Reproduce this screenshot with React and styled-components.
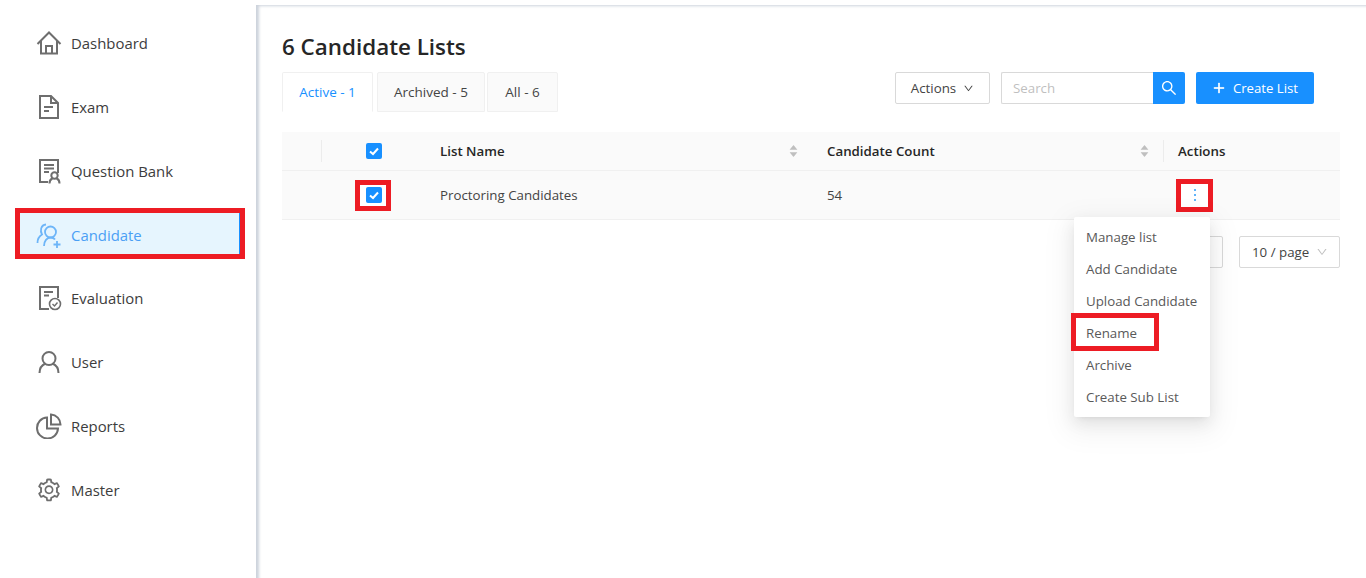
import React from 'react';
import styled, { createGlobalStyle } from 'styled-components';
import {
  AiOutlineDown,
  AiOutlinePlus,
  AiOutlineSearch,
  AiOutlineCaretUp,
  AiOutlineCaretDown,
  AiOutlineSetting,
} from 'react-icons/ai';

const RED = '#ed1c24';
const BLUE = '#1890ff';

const GlobalStyle = createGlobalStyle`
  html, body {
    margin: 0;
    padding: 0;
    background: #fff;
  }
  body {
    font-family: "Open Sans", "Noto Sans", "Liberation Sans", sans-serif;
    font-size: 13.3px;
    color: #333;
  }
  * {
    box-sizing: border-box;
  }
`;

const Page = styled.div`
  display: flex;
  width: 1366px;
  height: 578px;
  overflow: hidden;
`;

const Sidebar = styled.nav`
  width: 256px;
  flex: none;
  padding: 22.5px 16px 0 20px;
  display: flex;
  flex-direction: column;
`;

const NavRow = styled.div`
  height: 41px;
  margin: ${(p) => (p.$active ? '-1px 0 23.8px' : '0 0 22.8px')};
  padding: ${(p) => (p.$active ? '3px 0 0 16px' : '0 0 0 16px')};
  display: flex;
  align-items: center;
  gap: 9px;
  font-size: 14.9px;
  color: ${(p) => (p.$active ? '#4a9ff5' : '#3d3d3d')};
  background: ${(p) => (p.$active ? '#e6f5fe' : 'transparent')};
  border-right: ${(p) => (p.$active ? `1px solid ${BLUE}` : '0')};
  outline: ${(p) => (p.$active ? `5px solid ${RED}` : '0')};
  width: 220px;
  svg {
    flex: none;
    width: 26px;
    height: 26px;
  }
`;

const Main = styled.main`
  flex: 1;
  margin-top: 5px;
  padding: 27px 26px 0 26px;
  position: relative;
  box-shadow: inset 4px 2px 3px -1px #cdd3dc;
`;

const Title = styled.h1`
  margin: 0 0 10px;
  font-size: 22.4px;
  line-height: 30px;
  font-weight: 600;
  color: #262626;
`;

const TopRow = styled.div`
  display: flex;
  justify-content: space-between;
  align-items: flex-start;
  height: 60px;
`;

const Tabs = styled.div`
  display: flex;
  gap: 2px;
`;

const Tab = styled.div`
  width: ${(p) => p.$w}px;
  height: 40px;
  display: flex;
  align-items: center;
  justify-content: center;
  font-size: 13.5px;
  border: 1px solid #f0f0f0;
  color: ${(p) => (p.$active ? BLUE : '#444')};
  background: ${(p) => (p.$active ? '#fff' : '#fafafa')};
  border-bottom-color: ${(p) => (p.$active ? '#fff' : '#f0f0f0')};
  margin-right: ${(p) => (p.$active ? '2px' : '0')};
  border-radius: 2px 2px 0 0;
`;

const Toolbar = styled.div`
  display: flex;
  margin-right: 26px;
  gap: 11px;
`;

const ActionsButton = styled.button`
  width: 95px;
  height: 32px;
  border: 1px solid #d9d9d9;
  border-radius: 2px;
  background: #fff;
  color: #444;
  font: inherit;
  display: flex;
  align-items: center;
  justify-content: center;
  gap: 7px;
  padding: 0;
  svg {
    width: 11px;
    height: 11px;
  }
`;

const SearchBox = styled.div`
  display: flex;
  width: 184px;
  height: 32px;
`;

const SearchInput = styled.div`
  flex: 1;
  border: 1px solid #d9d9d9;
  border-right: 0;
  border-radius: 2px 0 0 2px;
  padding-left: 11px;
  line-height: 30px;
  color: #bfbfbf;
`;

const SearchButton = styled.div`
  width: 32px;
  background: ${BLUE};
  border-radius: 0 2px 2px 0;
  color: #fff;
  display: flex;
  align-items: center;
  justify-content: center;
  svg {
    width: 18px;
    height: 18px;
  }
`;

const CreateButton = styled.div`
  width: 118px;
  height: 32px;
  background: ${BLUE};
  border-radius: 2px;
  color: #fff;
  font-size: 13.2px;
  display: flex;
  align-items: center;
  justify-content: center;
  gap: 7px;
  svg {
    width: 14px;
    height: 14px;
    stroke: currentColor;
    stroke-width: 50;
  }
`;

const TableGrid = styled.div`
  width: 1058px;
  display: grid;
  grid-template-columns: 40px 104px 387px 351px 176px;
  background: #fafafa;
`;

const HeadCell = styled.div`
  height: 39px;
  padding: 0 14px;
  display: flex;
  align-items: center;
  justify-content: ${(p) => (p.$center ? 'center' : 'space-between')};
  font-weight: 600;
  color: #262626;
  border-bottom: 1px solid #f0f0f0;
  position: relative;
  &::after {
    content: ${(p) => (p.$divider ? '""' : 'none')};
    position: absolute;
    right: 0;
    top: 8px;
    height: 22px;
    width: 1px;
    background: #ececec;
  }
`;

const BodyCell = styled.div`
  height: 49px;
  padding: 0 14px;
  display: flex;
  align-items: center;
  justify-content: ${(p) => (p.$center ? 'center' : 'flex-start')};
  color: #444;
  border-bottom: 1px solid #f0f0f0;
`;

const SortIcon = styled.span`
  display: flex;
  flex-direction: column;
  color: #bfbfbf;
  svg {
    width: 11px;
    height: 11px;
    margin: -2px 0;
  }
`;

const CheckBox = styled.span`
  width: 16px;
  height: 16px;
  border-radius: 2px;
  background: ${BLUE};
  display: flex;
  align-items: center;
  justify-content: center;
`;

const Marked = styled.span`
  display: flex;
  align-items: center;
  justify-content: center;
  background: #fff;
  outline: 5px solid ${RED};
  width: ${(p) => p.$w}px;
  height: ${(p) => p.$h}px;
  margin-left: ${(p) => p.$shift || 0}px;
  padding-left: ${(p) => p.$inset || 0}px;
`;

const Dots = styled.span`
  display: flex;
  flex-direction: column;
  gap: 3px;
  i {
    display: block;
    width: 2px;
    height: 2px;
    background: #5fb3f9;
  }
`;

const Pager = styled.div`
  width: 1058px;
  margin-top: 16px;
  display: flex;
  justify-content: flex-end;
  gap: 16px;
`;

const PagerBox = styled.div`
  width: ${(p) => p.$w}px;
  height: 32px;
  border: 1px solid #d9d9d9;
  border-radius: 2px;
  display: flex;
  align-items: center;
  padding-left: 12px;
  gap: 7px;
  color: #444;
  svg {
    width: 12px;
    height: 12px;
    color: #bfbfbf;
  }
`;

const Menu = styled.div`
  position: absolute;
  left: 818px;
  top: 212px;
  width: 136px;
  height: 200px;
  padding: 4px 0;
  background: #fff;
  border-radius: 2px;
  box-shadow: 0 3px 6px -4px rgba(0, 0, 0, 0.12), 0 6px 16px 0 rgba(0, 0, 0, 0.08), 0 9px 28px 8px rgba(0, 0, 0, 0.05);
`;

const MenuItem = styled.div`
  height: 32px;
  line-height: 32px;
  padding-left: 12px;
  color: #595959;
  white-space: nowrap;
  position: relative;
`;

const MenuMark = styled.span`
  position: absolute;
  left: 2px;
  top: 1px;
  width: 78px;
  height: 28px;
  outline: 5px solid ${RED};
`;

const GREY = '#6e6e6e';
const stroke = { fill: 'none', stroke: 'currentColor', strokeWidth: 2 };

const HomeIcon = () => (
  <svg viewBox="0 0 26 26" {...stroke} color={GREY}>
    <path d="M1.5 14 13 2.5 24.5 14M5 11v12.5h16V11M10 23.5V16h6v7.5" />
  </svg>
);
const ExamIcon = () => (
  <svg viewBox="0 0 26 26" {...stroke} color={GREY}>
    <path d="M4 2h11l7 7v15H4zM15 2v7h7M8 13h9M8 17h5" />
  </svg>
);
const BankIcon = () => (
  <svg viewBox="0 0 26 26" {...stroke} color={GREY}>
    <path d="M12 24H4V2h18v13M8 7h10M8 10.5h10M8 14h5" />
    <circle cx="18.5" cy="17.5" r="3.2" />
    <path d="M13.5 25.5c0-3 1.5-4.5 3-5M23.5 25.5c0-3-1.5-4.5-3-5" />
  </svg>
);
const CandidateIcon = () => (
  <svg viewBox="0 0 26 26" {...stroke} color="#6db5f8" strokeWidth="1.8">
    <circle cx="14.5" cy="10" r="5.5" />
    <path d="M1.5 21c0-4 2-7 4.5-8.5C4 9 4.5 3 10 2.5M8 24c0-5 3-8.5 6.5-8.5 2 0 3.5.5 4.500 2M17.5 22.5h7M21 19v7" />
  </svg>
);
const EvalIcon = () => (
  <svg viewBox="0 0 26 26" {...stroke} color={GREY}>
    <path d="M13 24H4V2h18v11M8 7h9M8 10.5h5" />
    <circle cx="19" cy="19" r="5.5" strokeWidth="1.6" />
    <path d="m16.5 19 2 2 3-3.5" strokeWidth="1.4" />
  </svg>
);
const UserIcon = () => (
  <svg viewBox="0 0 26 26" {...stroke} color={GREY}>
    <circle cx="13" cy="9.5" r="6.5" />
    <path d="M3.5 24c0-5 2.5-8 6-9.5M22.5 24c0-5-2.5-8-6-9.5" />
  </svg>
);
const ReportIcon = () => (
  <svg viewBox="0 0 26 26" {...stroke} color={GREY}>
    <path d="M11 4.5a10.500 10.500 0 1 0 11 11H11zM15 1.500a10 10 0 0 1 9.500 10H15z" />
  </svg>
);
const GearIcon = () => <AiOutlineSetting color={GREY} />;

const Tick = () => (
  <svg width="12" height="12" viewBox="0 0 12 12" fill="none" stroke="#fff" strokeWidth="2">
    <path d="M2 6.5 5 9l5-5.5" />
  </svg>
);

const navItems = [
  ['Dashboard', HomeIcon],
  ['Exam', ExamIcon],
  ['Question Bank', BankIcon],
  ['Candidate', CandidateIcon],
  ['Evaluation', EvalIcon],
  ['User', UserIcon],
  ['Reports', ReportIcon],
  ['Master', GearIcon],
];

const menuItems = ['Manage list', 'Add Candidate', 'Upload Candidate', 'Rename', 'Archive', 'Create Sub List'];

const Sort = () => (
  <SortIcon>
    <AiOutlineCaretUp />
    <AiOutlineCaretDown />
  </SortIcon>
);

export default function App() {
  return (
    <Page>
      <GlobalStyle />
      <Sidebar>
        {navItems.map(([label, Icon]) => (
          <NavRow key={label} $active={label === 'Candidate'}>
            <Icon />
            {label}
          </NavRow>
        ))}
      </Sidebar>
      <Main>
        <Title>6 Candidate Lists</Title>
        <TopRow>
          <Tabs>
            <Tab $active $w={91}>Active - 1</Tab>
            <Tab $w={108}>Archived - 5</Tab>
            <Tab $w={71}>All - 6</Tab>
          </Tabs>
          <Toolbar>
            <ActionsButton>
              Actions <AiOutlineDown />
            </ActionsButton>
            <SearchBox>
              <SearchInput>Search</SearchInput>
              <SearchButton>
                <AiOutlineSearch />
              </SearchButton>
            </SearchBox>
            <CreateButton>
              <AiOutlinePlus /> Create List
            </CreateButton>
          </Toolbar>
        </TopRow>
        <TableGrid>
          <HeadCell $divider />
          <HeadCell $center>
            <CheckBox>
              <Tick />
            </CheckBox>
          </HeadCell>
          <HeadCell>
            List Name <Sort />
          </HeadCell>
          <HeadCell $divider>
            Candidate Count <Sort />
          </HeadCell>
          <HeadCell>Actions</HeadCell>
          <BodyCell />
          <BodyCell $center>
            <Marked $w={26} $h={21} $shift={-2} $inset={1}>
              <CheckBox>
                <Tick />
              </CheckBox>
            </Marked>
          </BodyCell>
          <BodyCell>Proctoring Candidates</BodyCell>
          <BodyCell>54</BodyCell>
          <BodyCell>
            <Marked $w={27} $h={23} $shift={3}>
              <Dots>
                <i />
                <i />
                <i />
              </Dots>
            </Marked>
          </BodyCell>
        </TableGrid>
        <Pager>
          <PagerBox $w={32} />
          <PagerBox $w={101}>
            10 / page <AiOutlineDown />
          </PagerBox>
        </Pager>
        <Menu>
          {menuItems.map((item) => (
            <MenuItem key={item}>
              {item === 'Rename' && <MenuMark />}
              {item}
            </MenuItem>
          ))}
        </Menu>
      </Main>
    </Page>
  );
}
